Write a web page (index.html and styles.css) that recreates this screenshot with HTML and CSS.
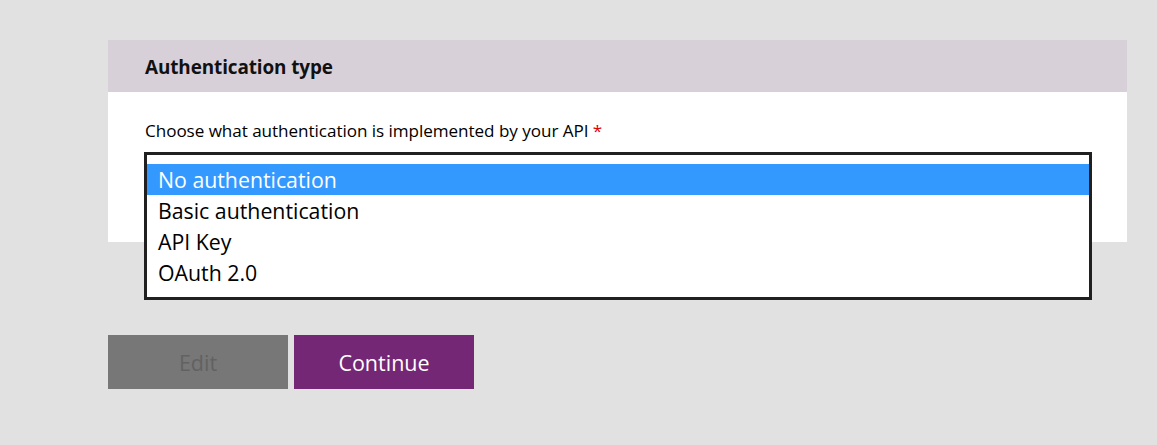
FILE: index.html
```html
<!DOCTYPE html>
<html lang="en">
<head>
<meta charset="utf-8">
<title>Authentication type</title>
<link rel="stylesheet" href="styles.css">
</head>
<body>
<div class="page">
  <section class="card">
    <header class="card-header">Authentication type</header>
    <div class="card-body">
      <div class="field">
        <label class="field-label">Choose what authentication is implemented by your API <span class="req">*</span></label>
        <div class="select-anchor">
          <ul class="listbox" role="listbox">
            <li class="option selected">No authentication</li>
            <li class="option">Basic authentication</li>
            <li class="option">API Key</li>
            <li class="option">OAuth 2.0</li>
          </ul>
        </div>
      </div>
    </div>
  </section>
  <div class="actions">
    <button class="btn btn-disabled">Edit</button>
    <button class="btn btn-primary">Continue</button>
  </div>
</div>
</body>
</html>
```

FILE: styles.css
```css
* { box-sizing: border-box; }
html, body { margin: 0; padding: 0; }
body {
  background: #e1e1e1;
  font-family: "Segoe UI", "Open Sans", "Noto Sans", sans-serif;
  color: #000;
  width: 1157px;
  height: 445px;
  overflow: hidden;
}
.page {
  padding: 40px 30px 0 108px;
}
.card {
  background: #fff;
  width: 1019px;
}
.card-header {
  height: 52px;
  background: #d8d0d8;
  padding-left: 37px;
  display: flex;
  align-items: center;
  font-weight: 700;
  font-size: 18.9px;
  letter-spacing: -0.1px;
  padding-top: 2px;
  color: #111;
}
.card-body {
  height: 150px;
  padding: 27px 36px 0 36px;
}
.field-label {
  display: block;
  font-size: 17.1px;
  line-height: 24px;
  padding-left: 1px;
  letter-spacing: -0.05px;
}
.req { color: #e00000; }
.select-anchor {
  position: relative;
  height: 0;
}
.listbox {
  position: absolute;
  top: 9px;
  left: 0;
  width: 948px;
  margin: 0;
  padding: 9px 0 9px 0;
  list-style: none;
  background: #fff;
  border: 3px solid #202020;
  z-index: 2;
}
.option {
  height: 31px;
  line-height: 31px;
  padding-left: 11px;
  font-size: 21.3px;
  color: #000;
}
.option.selected {
  background: #3399ff;
  color: #fff;
}
.actions {
  display: flex;
  gap: 6px;
  margin-top: 93px;
}
.btn {
  width: 180px;
  height: 54px;
  border: none;
  font-family: inherit;
  font-size: 21.5px;
  padding: 0;
}
.btn-disabled {
  background: #777777;
  color: #626262;
}
.btn-primary {
  background: #742774;
  color: #fff;
}
```
